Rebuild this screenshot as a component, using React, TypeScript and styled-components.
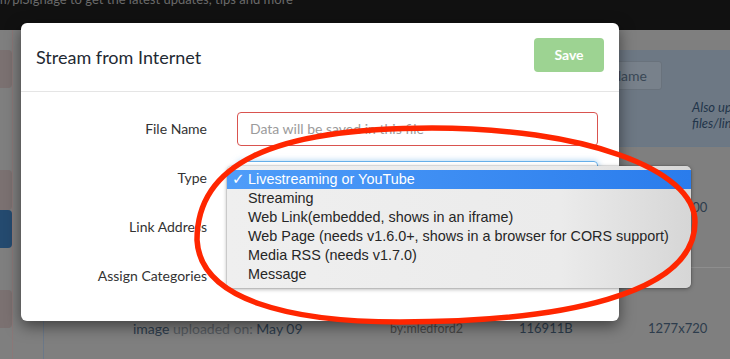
import React from "react";
import styled, { createGlobalStyle } from "styled-components";

const Global = createGlobalStyle`
  html, body { margin: 0; padding: 0; }
  body {
    width: 730px;
    height: 359px;
    overflow: hidden;
    background: #7f7f7f;
    font-family: Lato, "Open Sans", sans-serif;
  }
`;

const Page = styled.div`
  position: relative;
  width: 730px;
  height: 359px;
  overflow: hidden;
  background: #7f7f7f;
  display: flex;
  flex-direction: column;
`;

const TopBar = styled.div`
  flex: none;
  height: 30px;
  background: #111111;
  overflow: hidden;
`;

const TopText = styled.div`
  margin: -10px 0 0 -4px;
  font-size: 13px;
  line-height: 18px;
  color: #6a6a6a;
  white-space: nowrap;
`;

const Main = styled.div`
  flex: 1;
  display: flex;
  min-height: 0;
`;

const Sidebar = styled.div`
  flex: none;
  width: 12px;
  border-right: 1px solid #8b7878;
  padding-top: 20px;
  display: flex;
  flex-direction: column;
`;

const SideItem = styled.div<{ $tone: "brown" | "blue" | "none"; $h: number }>`
  flex: none;
  height: ${(p) => p.$h}px;
  border-radius: 0 4px 4px 0;
  background: ${(p) =>
    p.$tone === "brown" ? "#7b7171" : p.$tone === "blue" ? "#244a6f" : "transparent"};
`;

const Content = styled.div`
  flex: 1;
  min-width: 0;
  display: flex;
  flex-direction: column;
  padding-top: 20px;
  background: #7f7f7f;
`;

const InfoPanel = styled.div`
  flex: none;
  height: 97px;
  box-sizing: border-box;
  margin-left: 30px;
  background: #6d7884;
  border-bottom: 1px solid #6a7886;
  display: grid;
  grid-template-columns: 82px 1fr;
  column-gap: 30px;
  align-items: start;
  padding: 11px 0 0 537px;
  overflow: hidden;
`;

const NameButton = styled.div`
  height: 29px;
  box-sizing: border-box;
  border: 1px solid #69727c;
  border-radius: 3px;
  background: #78818b;
  color: #3a4856;
  font-size: 14px;
  line-height: 27px;
  text-align: right;
  padding-right: 14px;
  white-space: nowrap;
`;

const InfoNote = styled.div`
  margin-top: 38px;
  font-size: 13px;
  line-height: 16px;
  font-style: italic;
  color: #22354a;
  white-space: nowrap;
`;

const Table = styled.div`
  flex: 1;
  margin-left: 30px;
  border-left: 1px solid #6b7888;
  display: flex;
  flex-direction: column;
`;

const Row = styled.div`
  flex: none;
  height: 121px;
  box-sizing: border-box;
  border-bottom: 1px solid #8e8e8e;
  display: grid;
  grid-template-columns: 89px 257px 129px 129px 1fr;
  align-items: center;
  font-size: 13px;
  color: #2d3c4c;
  white-space: nowrap;
`;

const NameCell = styled.span`
  font-size: 14px;
`;

const Muted = styled.span`
  color: #555a5f;
`;

const ByCell = styled.span`
  color: #474747;
  font-size: 12.5px;
`;

const Modal = styled.div`
  position: absolute;
  left: 21px;
  top: 23px;
  width: 598px;
  height: 298px;
  background: #ffffff;
  border-radius: 6px;
  box-shadow: 0 5px 15px rgba(0, 0, 0, 0.5);
  display: flex;
  flex-direction: column;
`;

const ModalHeader = styled.div`
  display: flex;
  align-items: center;
  justify-content: space-between;
  padding: 15px 15px 19px 15px;
  border-bottom: 1px solid #e5e5e5;
`;

const Title = styled.div`
  font-size: 18px;
  line-height: 22px;
  color: #1f2a33;
  padding-top: 4px;
`;

const SaveButton = styled.div`
  width: 70px;
  height: 34px;
  border-radius: 4px;
  background: #9dd392;
  color: #ffffff;
  font-size: 14px;
  font-weight: 700;
  line-height: 34px;
  text-align: center;
`;

const ModalBody = styled.div`
  padding: 20px 21px 0 15px;
  display: grid;
  grid-template-columns: 171px 361px;
  column-gap: 30px;
  row-gap: 15px;
`;

const Label = styled.div`
  height: 34px;
  line-height: 34px;
  text-align: right;
  font-size: 14px;
  color: #333333;
`;

const TextInput = styled.div`
  height: 34px;
  box-sizing: border-box;
  border: 1px solid #d9534f;
  border-radius: 4px;
  padding: 0 12px;
  line-height: 32px;
  font-size: 14px;
  color: #9b9b9b;
`;

const SelectBox = styled.div`
  height: 34px;
  box-sizing: border-box;
  border: 1px solid #66afe9;
  border-radius: 4px;
  box-shadow: 0 0 6px rgba(102, 175, 233, 0.6);
`;

const PlainBox = styled.div`
  height: 34px;
  box-sizing: border-box;
  border: 1px solid #cccccc;
  border-radius: 4px;
`;

const Empty = styled.div`
  height: 34px;
`;

const Menu = styled.div`
  position: absolute;
  left: 227px;
  top: 166px;
  width: 464px;
  padding: 4px 0;
  border-radius: 5px;
  background: linear-gradient(to right, #efefef 0%, #ebebeb 72%, #d6d6d6 100%);
  box-shadow: 0 1px 4px rgba(0, 0, 0, 0.35), 0 0 0 0.5px rgba(0, 0, 0, 0.15);
  font-family: "Liberation Sans", Arial, sans-serif;
  font-size: 14.4px;
`;

const MenuItem = styled.div<{ $active?: boolean }>`
  position: relative;
  height: 19px;
  line-height: 19px;
  padding-left: 21px;
  color: ${(p) => (p.$active ? "#ffffff" : "#262626")};
  background: ${(p) => (p.$active ? "linear-gradient(to right, #4f9df9, #2a7cec)" : "transparent")};
  white-space: nowrap;
`;

const Check = styled.span`
  position: absolute;
  left: 5px;
  top: 0;
  font-family: "DejaVu Sans", sans-serif;
  font-size: 15px;
  font-weight: 700;
  color: #ffffff;
`;

const Overlay = styled.svg`
  position: absolute;
  left: 0;
  top: 0;
  pointer-events: none;
`;

const items = [
  "Livestreaming or YouTube",
  "Streaming",
  "Web Link(embedded, shows in an iframe)",
  "Web Page (needs v1.6.0+, shows in a browser for CORS support)",
  "Media RSS (needs v1.7.0)",
  "Message",
];

export default function App() {
  return (
    <>
      <Global />
      <Page>
        <TopBar>
          <TopText>m/piSignage to get the latest updates, tips and more</TopText>
        </TopBar>
        <Main>
          <Sidebar>
            <SideItem $tone="brown" $h={38} />
            <SideItem $tone="none" $h={82} />
            <SideItem $tone="brown" $h={40} />
            <SideItem $tone="blue" $h={38} />
            <SideItem $tone="none" $h={42} />
            <SideItem $tone="brown" $h={38} />
          </Sidebar>
          <Content>
            <InfoPanel>
              <NameButton>Name</NameButton>
              <InfoNote>
                Also upload
                <br />
                files/links
              </InfoNote>
            </InfoPanel>
            <Table>
              <Row>
                <span />
                <NameCell>
                  video <Muted>uploaded on:</Muted> May 09
                </NameCell>
                <ByCell>by:mledford2</ByCell>
                <span>204800B</span>
                <span>1280x700</span>
              </Row>
              <Row>
                <span />
                <NameCell>
                  image <Muted>uploaded on:</Muted> May 09
                </NameCell>
                <ByCell>by:mledford2</ByCell>
                <span>116911B</span>
                <span>1277x720</span>
              </Row>
            </Table>
          </Content>
        </Main>

        <Modal>
          <ModalHeader>
            <Title>Stream from Internet</Title>
            <SaveButton>Save</SaveButton>
          </ModalHeader>
          <ModalBody>
            <Label>File Name</Label>
            <TextInput>Data will be saved in this file</TextInput>
            <Label>Type</Label>
            <SelectBox />
            <Label>Link Address</Label>
            <PlainBox />
            <Label>Assign Categories</Label>
            <Empty />
          </ModalBody>
        </Modal>

        <Menu>
          {items.map((t, i) => (
            <MenuItem key={t} $active={i === 0}>
              {i === 0 && <Check>✓</Check>}
              {t}
            </MenuItem>
          ))}
        </Menu>

        <Overlay width="730" height="359" viewBox="0 0 730 359">
          <path
            d="M 432 128 C 580 128, 695 168, 695 222 C 695 295, 560 322, 400 322 C 290 322, 200 300, 197 240 C 197 165, 270 128, 432 128 Z"
            fill="none"
            stroke="#ff2600"
            strokeWidth="5.5"
            strokeLinejoin="round"
          />
        </Overlay>
      </Page>
    </>
  );
}
